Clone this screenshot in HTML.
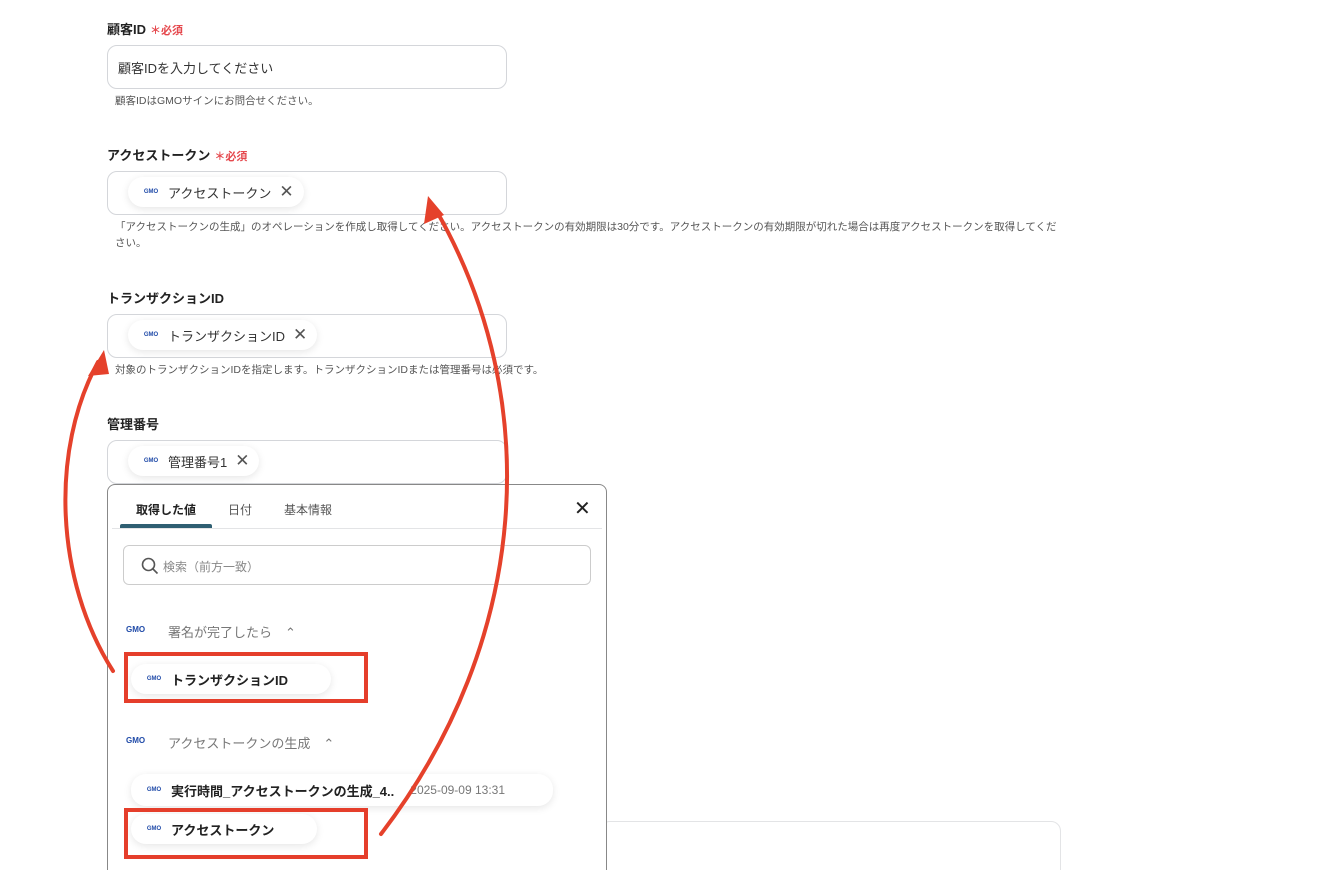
<!DOCTYPE html><html style="height:870px;overflow:hidden"><head><meta charset="utf-8"><style>
body{margin:0;width:1334px;height:870px;background:#fff;position:relative;overflow:hidden;font-family:"Liberation Sans","Noto Sans CJK JP",sans-serif;color:#222}
.a{position:absolute}
.lbl{font-size:13px;font-weight:bold;color:#222}
.req{color:#e5484d;font-size:11px;font-weight:bold;margin-left:4px}
.inp{position:absolute;left:107px;width:398px;height:42px;border:1px solid #d4d6da;border-radius:10px;background:#fff}
.help{font-size:10.5px;color:#555;line-height:16px}
.chip{position:absolute;height:30px;border-radius:15px;background:#fff;box-shadow:0 2px 8px rgba(0,0,0,.1);display:flex;align-items:center;font-size:13px;color:#333;white-space:nowrap}
.gmo{display:inline-block;width:18px;text-align:center;font-size:6px;font-weight:bold;color:#1f4aa8;line-height:6px;margin:0 8px 0 14px}
.x{margin-left:8px;margin-right:10px;font-size:17px;color:#555}
</style></head><body>
<div class="a lbl" style="left:107px;top:19px">顧客ID<span class="req">＊必須</span></div>
<div class="inp" style="top:45px"><div class="a" style="left:10px;top:12px;font-size:13px;color:#333">顧客IDを入力してください</div></div>
<div class="a help" style="left:115px;top:93px">顧客IDはGMOサインにお問合せください。</div>

<div class="a lbl" style="left:107px;top:145px">アクセストークン<span class="req">＊必須</span></div>
<div class="inp" style="top:171px"></div>
<div class="chip" style="left:128px;top:177px"><span class="gmo">GMO</span>アクセストークン<span class="x">✕</span></div>
<div class="a help" style="left:115px;top:219px;width:945px">「アクセストークンの生成」のオペレーションを作成し取得してください。アクセストークンの有効期限は30分です。アクセストークンの有効期限が切れた場合は再度アクセストークンを取得してください。</div>

<div class="a lbl" style="left:107px;top:288px">トランザクションID</div>
<div class="inp" style="top:314px"></div>
<div class="chip" style="left:128px;top:320px"><span class="gmo">GMO</span>トランザクションID<span class="x">✕</span></div>
<div class="a help" style="left:115px;top:362px">対象のトランザクションIDを指定します。トランザクションIDまたは管理番号は必須です。</div>

<div class="a lbl" style="left:107px;top:414px">管理番号</div>
<div class="inp" style="top:440px"></div>
<div class="chip" style="left:128px;top:446px"><span class="gmo">GMO</span>管理番号1<span class="x">✕</span></div>

<div class="a" style="left:600px;top:821px;width:459px;height:60px;border:1px solid #e3e4e6;border-radius:10px"></div>

<div class="a" style="left:107px;top:484px;width:498px;height:420px;border:1px solid #888;border-radius:8px;background:#fff">
 <div class="a" style="left:28px;top:16px;font-size:12px;font-weight:bold;color:#222">取得した値</div>
 <div class="a" style="left:120px;top:16px;font-size:12px;color:#555">日付</div>
 <div class="a" style="left:176px;top:16px;font-size:12px;color:#555">基本情報</div>
 <div class="a" style="left:466px;top:11px;font-size:20px;color:#222">✕</div>
 <div class="a" style="left:12px;top:39px;width:92px;height:4px;background:#2f5f72;border-radius:2px 2px 0 0"></div>
 <div class="a" style="left:4px;top:43px;width:490px;height:1px;background:#e3e4e6"></div>
 <div class="a" style="left:15px;top:60px;width:466px;height:38px;border:1px solid #ccc;border-radius:6px">
  <svg class="a" style="left:17px;top:11px" width="18" height="18" viewBox="0 0 18 18"><circle cx="7.5" cy="7.5" r="6" fill="none" stroke="#555" stroke-width="1.6"/><path d="M12 12l4.5 4.5" stroke="#555" stroke-width="1.6"/></svg>
  <div class="a" style="left:39px;top:12px;font-size:12px;color:#888">検索（前方一致）</div>
 </div>
 <div class="a" style="left:18px;top:140px;font-size:8px;font-weight:bold;color:#1f4aa8">GMO</div>
 <div class="a" style="left:60px;top:137px;font-size:13px;color:#777">署名が完了したら　⌃</div>
 <div class="a" style="left:18px;top:251px;font-size:8px;font-weight:bold;color:#1f4aa8">GMO</div>
 <div class="a" style="left:60px;top:248px;font-size:13px;color:#777">アクセストークンの生成　⌃</div>
</div>
<div class="chip" style="left:131px;top:664px;width:200px;font-weight:bold;color:#222"><span class="gmo">GMO</span>トランザクションID</div>
<div class="chip" style="left:131px;top:774px;width:422px;font-weight:bold;color:#222;height:32px"><span class="gmo">GMO</span>実行時間_アクセストークンの生成_4..<span style="font-weight:normal;color:#777;font-size:12px;margin-left:16px">2025-09-09 13:31</span></div>
<div class="chip" style="left:131px;top:814px;width:186px;font-weight:bold;color:#222"><span class="gmo">GMO</span>アクセストークン</div>

<div class="a" style="left:124px;top:652px;width:236px;height:43px;border:4px solid #e53e2b"></div>
<div class="a" style="left:124px;top:808px;width:236px;height:43px;border:4px solid #e53e2b"></div>

<svg class="a" style="left:0;top:0" width="1334" height="870">
 <g fill="none" stroke="#e5412b" stroke-width="4" stroke-linecap="round">
  <path d="M113 671 C55 580 50 450 98 362"/>
  <path d="M381 834 C530 640 545 400 436 210"/>
 </g>
 <path d="M104 350 L88 376 L109 374 Z" fill="#e5412b"/>
 <path d="M428 196 L424 224 L444 215 Z" fill="#e5412b"/>
</svg>
</body></html>
